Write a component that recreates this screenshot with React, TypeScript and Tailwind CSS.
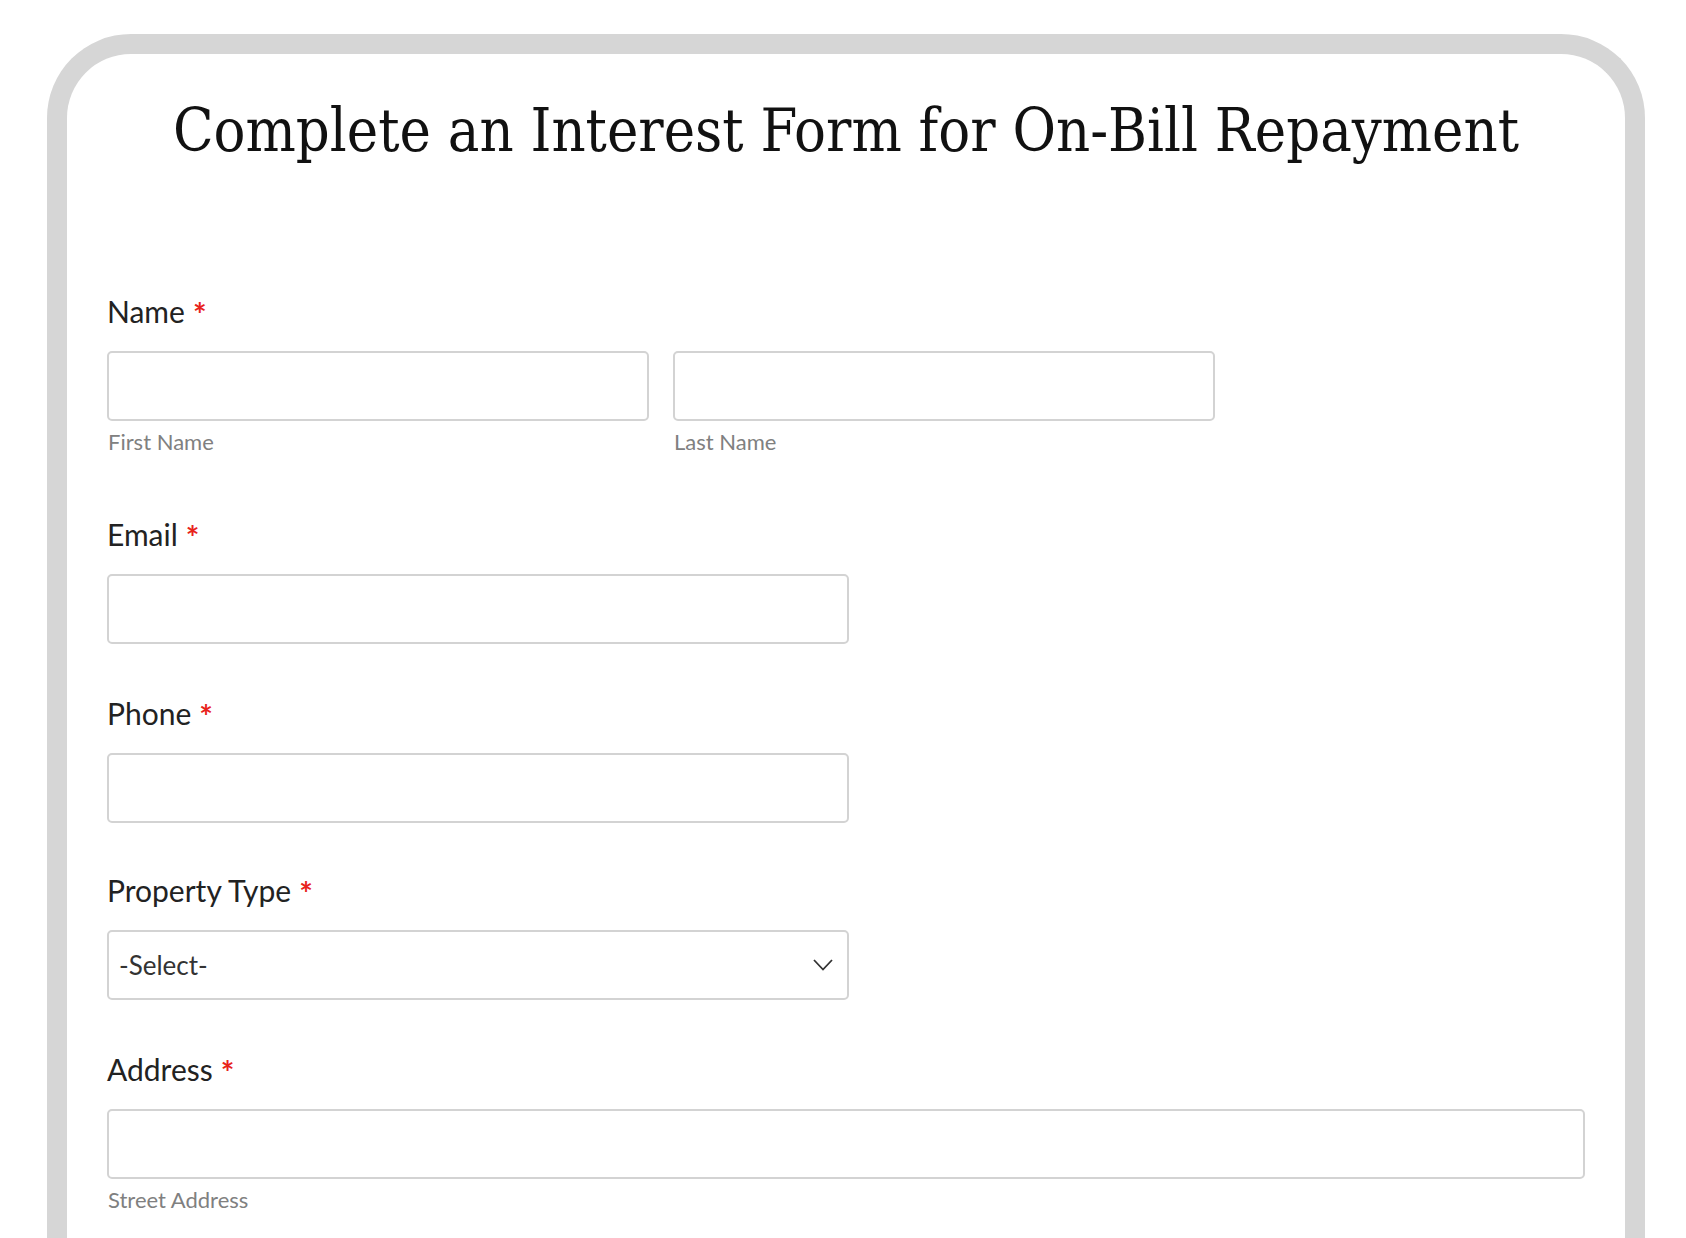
import React from 'react'

const labelCls = "font-['Lato',sans-serif] text-[30px] leading-[36px] text-[#222]"
const subCls = "font-['Lato',sans-serif] text-[22px] leading-[28px] text-[#808080] mt-[7px] pl-[1px]"
const inputCls = 'h-[70px] rounded-[5px] border-2 border-[#d3d3d3] bg-white'

function Label({ text }: { text: string }) {
  return (
    <div className={labelCls}>
      {text}
      <span className="ml-[8px] text-[32px] font-bold text-[#e8231b] relative top-[4px]">*</span>
    </div>
  )
}

export default function App() {
  return (
    <div className="h-[1238px] overflow-hidden bg-white pt-[34px] pl-[47px] pr-[41px]">
      <div className="min-h-[1300px] rounded-t-[84px] border-[20px] border-b-0 border-[#d6d6d6] bg-white px-10">
        <h1 className="pt-[37px] text-center font-['DejaVu_Serif_Condensed','DejaVu_Serif',serif] text-[59px] leading-[80px] font-normal text-[#111]">
          Complete an Interest Form for On-Bill Repayment
        </h1>

        <div className="mt-[122px]">
          {/* Name */}
          <Label text="Name" />
          <div className="mt-[22px] flex gap-6 w-[1108px]">
            <div className="flex-1">
              <div className={inputCls} />
              <div className={subCls}>First Name</div>
            </div>
            <div className="flex-1">
              <div className={inputCls} />
              <div className={subCls}>Last Name</div>
            </div>
          </div>

          {/* Email */}
          <div className="mt-[60px]">
            <Label text="Email" />
            <div className={`mt-[22px] w-[742px] ${inputCls}`} />
          </div>

          {/* Phone */}
          <div className="mt-[51px]">
            <Label text="Phone" />
            <div className={`mt-[22px] w-[742px] ${inputCls}`} />
          </div>

          {/* Property type */}
          <div className="mt-[49px]">
            <Label text="Property Type" />
            <div className={`mt-[22px] w-[742px] ${inputCls} flex items-center justify-between pl-[10px] pr-[14px]`}>
              <span className="font-['Lato',sans-serif] text-[26px] text-[#333]">-Select-</span>
              <svg width="20" height="12" viewBox="0 0 20 12" fill="none">
                <polyline points="1,1 10,10.5 19,1" stroke="#333" strokeWidth="1.8" />
              </svg>
            </div>
          </div>

          {/* Address */}
          <div className="mt-[51px]">
            <Label text="Address" />
            <div className={`mt-[22px] ${inputCls}`} />
            <div className={subCls}>Street Address</div>
          </div>
        </div>
      </div>
    </div>
  )
}
